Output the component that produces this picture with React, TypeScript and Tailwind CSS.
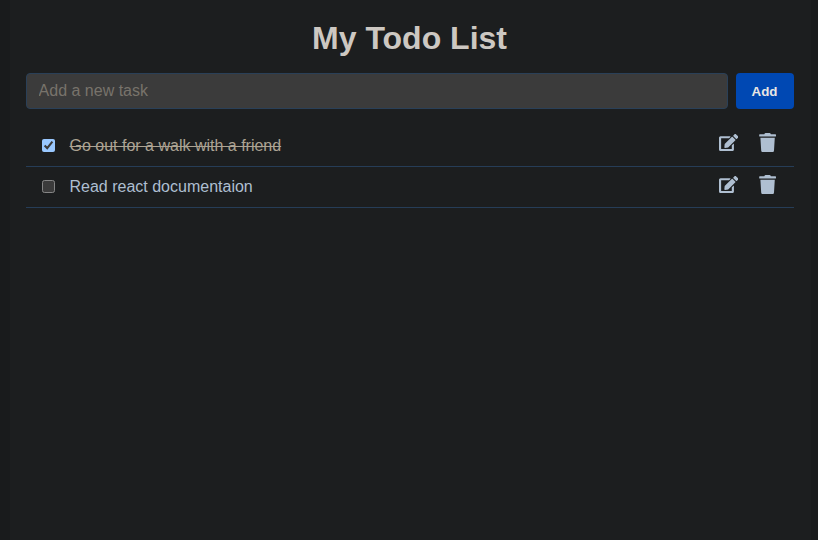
import { useState } from "react";
import { FaEdit, FaTrash } from "react-icons/fa";

type Task = { id: number; text: string; done: boolean };

const initialTasks: Task[] = [
  { id: 1, text: "Go out for a walk with a friend", done: true },
  { id: 2, text: "Read react documentaion", done: false },
];

function TaskRow({ task, onToggle }: { task: Task; onToggle: () => void }) {
  return (
    <li className="flex h-[41.4px] items-start border-b border-[#263d57] pl-4 pr-[16.8px]">
      <input
        type="checkbox"
        checked={task.done}
        onChange={onToggle}
        className="mt-[13.4px] size-[13px] shrink-0 accent-[#99c8ff] [color-scheme:dark]"
      />
      <span
        className={
          task.done
            ? "ml-[14.5px] mt-[8.3px] grow text-base leading-6 text-[#aca393] line-through"
            : "ml-[14.5px] mt-[8.3px] grow text-base leading-6 text-[#aebfd1]"
        }
      >
        {task.text}
      </span>
      <div className="mt-[7.7px] flex gap-[19.8px] text-[#afbfd1]">
        <button aria-label="Edit">
          <FaEdit size={19.2} />
        </button>
        <button aria-label="Delete">
          <FaTrash size={19.2} />
        </button>
      </div>
    </li>
  );
}

export default function App() {
  const [tasks, setTasks] = useState(initialTasks);
  const [draft, setDraft] = useState("");

  const toggle = (id: number) =>
    setTasks(tasks.map((t) => (t.id === id ? { ...t, done: !t.done } : t)));

  const add = () => {
    if (!draft.trim()) return;
    setTasks([...tasks, { id: Date.now(), text: draft, done: false }]);
    setDraft("");
  };

  return (
    <div className="h-screen overflow-hidden bg-[#191b1c] px-[10px] font-['Liberation_Sans',Arial,sans-serif]">
      <main className="h-full w-[801px] bg-[#1c1e1f] pl-4 pr-[17px] pt-5">
        <h1 className="pr-px text-center text-[32px] font-bold leading-9 text-[#cdc8c2]">
          My Todo List
        </h1>
        <div className="mt-[17px] flex h-9 gap-2">
          <input
            value={draft}
            onChange={(e) => setDraft(e.target.value)}
            placeholder="Add a new task"
            className="min-w-0 grow rounded border border-[#2a4058] bg-[#3b3b3b] pl-[11.6px] pr-3 text-base text-[#cdc8c2] placeholder:text-[#78736b]"
          />
          <button
            onClick={add}
            className="w-[58px] rounded bg-[#0048b3] pr-px pt-0.5 text-[13.333px] font-bold text-[#e8e6e3]"
          >
            Add
          </button>
        </div>
        <ul className="mt-[16.5px]">
          {tasks.map((t) => (
            <TaskRow key={t.id} task={t} onToggle={() => toggle(t.id)} />
          ))}
        </ul>
      </main>
    </div>
  );
}
